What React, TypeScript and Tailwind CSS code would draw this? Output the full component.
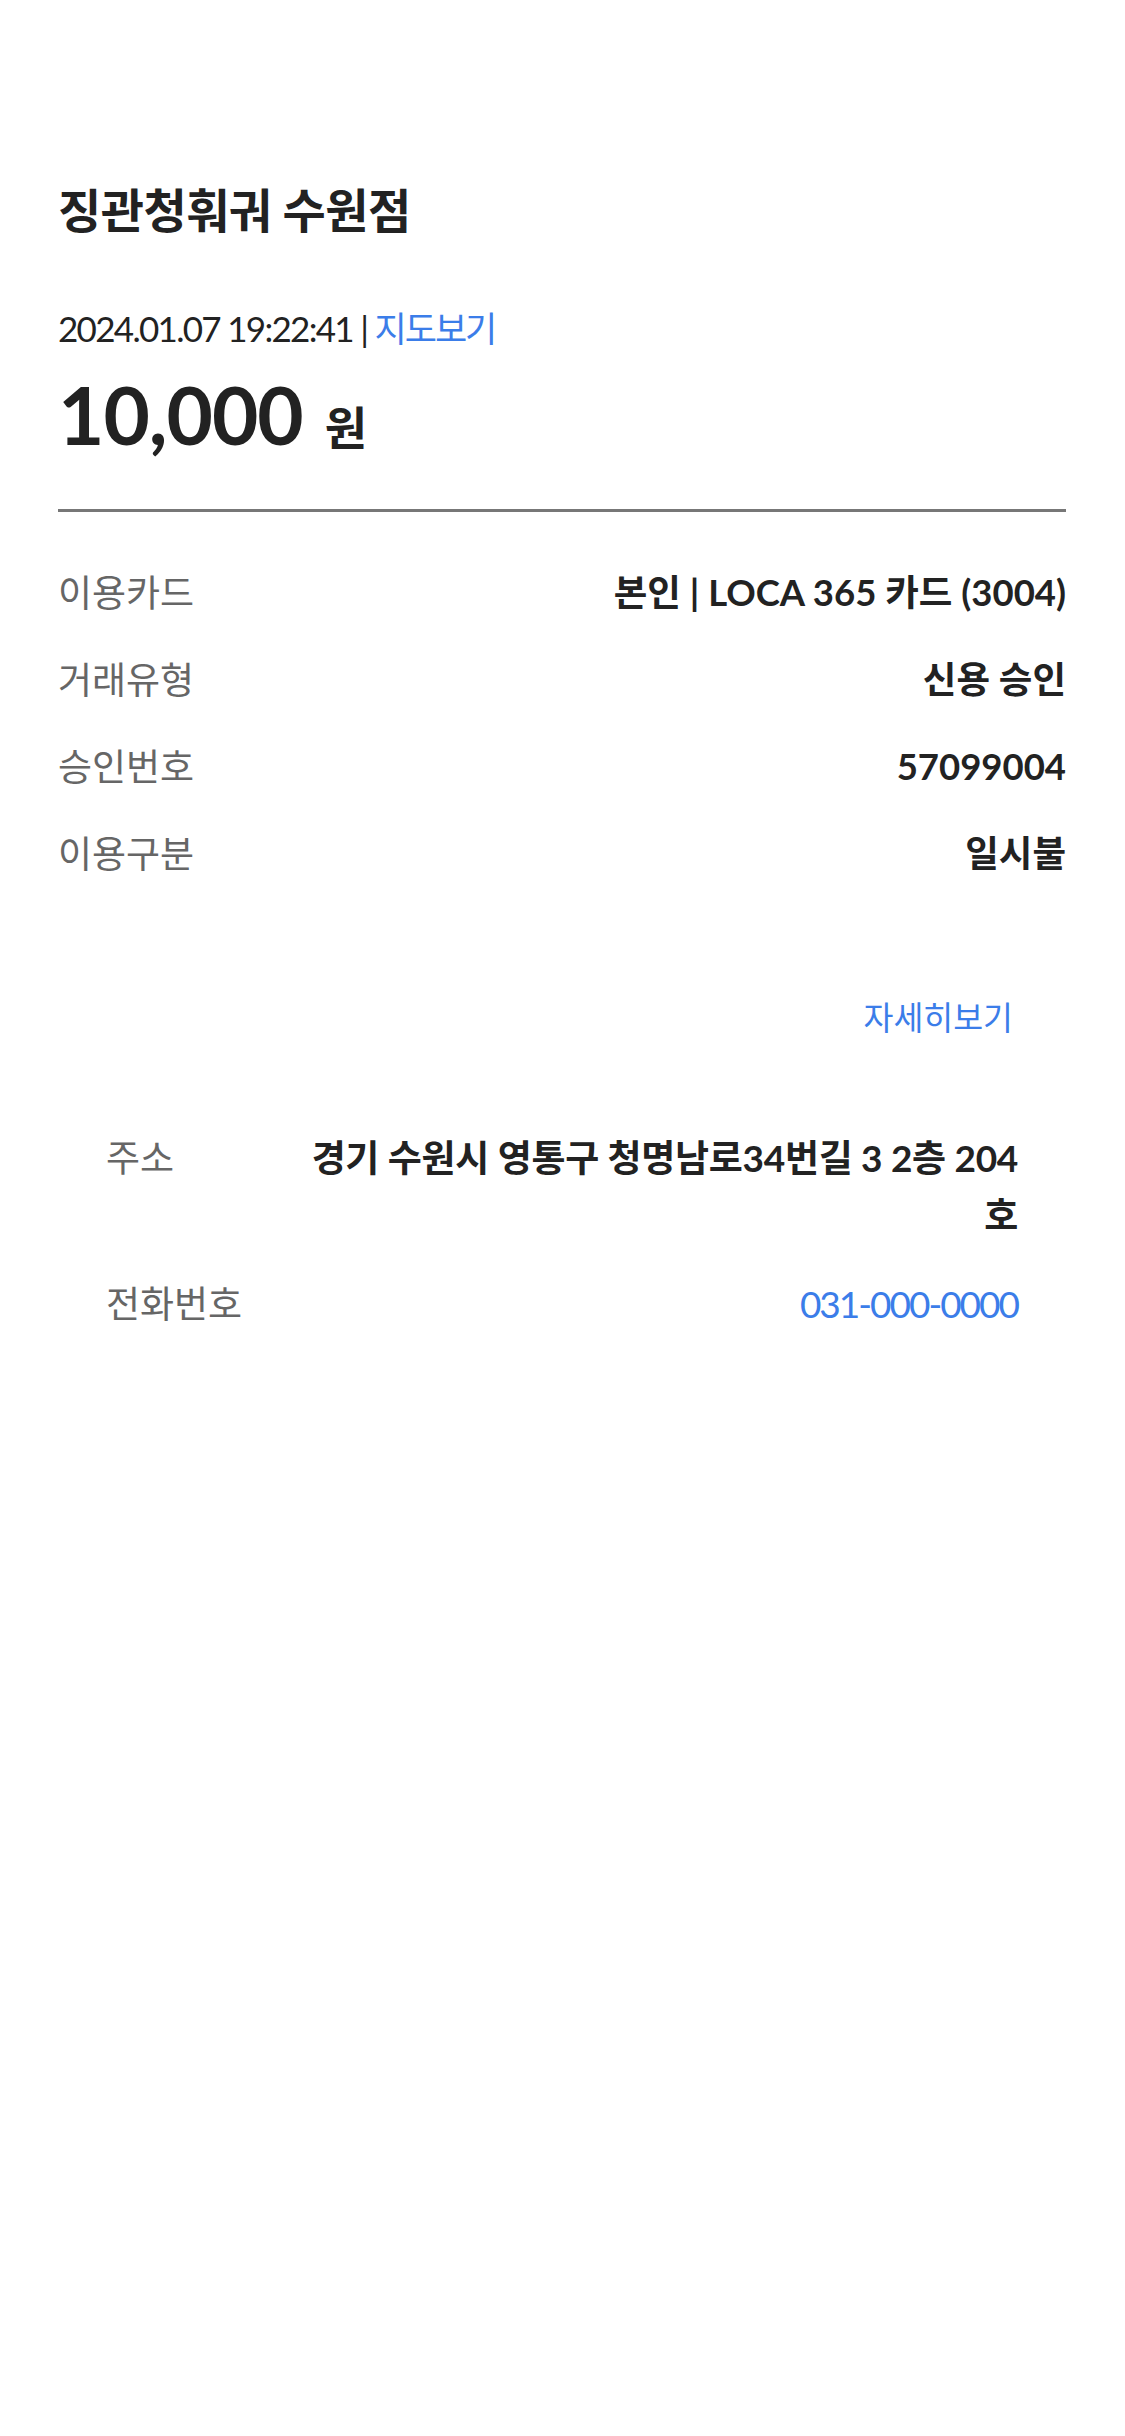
const rows = [
  { label: "이용카드", value: "본인 | LOCA 365 카드 (3004)" },
  { label: "거래유형", value: "신용 승인" },
  { label: "승인번호", value: "57099004" },
  { label: "이용구분", value: "일시불" },
];

const App = () => {
  return (
    <div className="min-h-screen bg-white font-['Lato','Noto_Sans_CJK_KR',sans-serif] text-[#222]">
      <div className="pl-[58px] pr-[59px] pt-[180px]">
        {/* Header */}
        <h1 className="text-[47px] font-bold leading-[60px] tracking-[-0.5px]">
          징관청훠궈 수원점
        </h1>
        <p className="mt-[64px] text-[35px] leading-[48px] tracking-[-1.7px]">
          2024.01.07 19:22:41 |{" "}
          <span className="tracking-[-2px] text-[#3b7de9]">지도보기</span>
        </p>
        <div className="mt-[12px] flex h-[100px] items-baseline leading-[100px]">
          <span className="text-[80px] font-bold tracking-[-1px]">10,000</span>
          <span className="ml-[22px] text-[46px] font-bold leading-none">원</span>
        </div>

        <div className="mt-[45px] h-[3px] bg-[#777]" />

        {/* Payment info */}
        <div className="mt-[37px]">
          {rows.map((row) => (
            <div
              key={row.label}
              className="flex h-[87px] items-center justify-between"
            >
              <span className="text-[37px] text-[#666]">{row.label}</span>
              <span className="text-[36.5px] font-bold">{row.value}</span>
            </div>
          ))}
        </div>

        {/* Store info */}
        <div className="px-[48px]">
          <div className="mt-[96px] pr-[5px] text-right text-[32.5px] leading-[50px] text-[#3b7de9]">
            자세히보기
          </div>
          <div className="mt-[86px] flex text-[37px] leading-[57px]">
            <span className="w-[190px] shrink-0 text-[#666]">주소</span>
            <span className="flex-1 text-right font-bold tracking-[-0.3px]">
              경기 수원시 영통구 청명남로34번길 3 2층 204 호
            </span>
          </div>
          <div className="mt-[32px] flex justify-between text-[37px] leading-[57px]">
            <span className="text-[#666]">전화번호</span>
            <span className="tracking-[-2px] text-[#3b7de9]">031-000-0000</span>
          </div>
        </div>
      </div>
    </div>
  );
};

export default App;
